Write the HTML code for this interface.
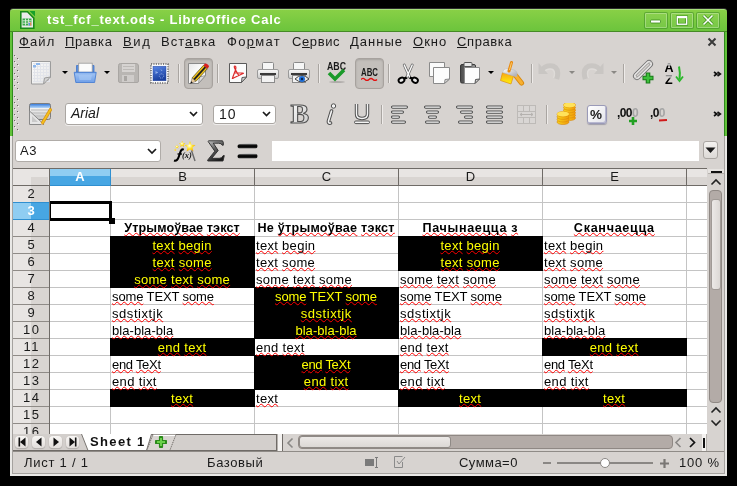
<!DOCTYPE html><html><head><meta charset="utf-8"><style>
*{margin:0;padding:0;box-sizing:border-box}
html,body{width:737px;height:486px;overflow:hidden;background:#000;font-family:"Liberation Sans", sans-serif}
.ab{position:absolute}
.t{position:absolute;white-space:pre;line-height:1}
body{will-change:transform}
</style></head><body>
<div class="ab" style="left:0;top:0;width:737px;height:486px;background:#000"></div>

<div class="ab" style="left:10px;top:9px;width:717px;height:23px;background:linear-gradient(#88d046,#6cc43c);border-top:1px solid #a6e07a;border-bottom:1px solid #468a26;border-radius:3px 3px 0 0;box-shadow:0 -1px 0 #2a2a2a"></div>
<div class="ab" style="left:10px;top:32px;width:3px;height:104px;background:#62c23a;border-right:1px solid #2f8a1c"></div>
<div class="ab" style="left:724px;top:32px;width:3px;height:104px;background:#62c23a;border-left:1px solid #2f8a1c"></div>
<div class="ab" style="left:10px;top:136px;width:3px;height:340px;background:#e9e8e6;border-right:1px solid #a5a29f"></div>
<div class="ab" style="left:724px;top:136px;width:3px;height:340px;background:#e9e8e6;border-left:1px solid #a5a29f"></div>
<div class="ab" style="left:12px;top:473px;width:713px;height:1px;background:#a5a29f"></div>
<div class="ab" style="left:10px;top:474px;width:717px;height:2px;background:#e9e8e6"></div>
<div class="ab" style="left:13px;top:32px;width:711px;height:441px;background:#d7d3d0"></div>
<div class="t" style="left:47px;top:13px;font-size:13px;font-weight:bold;color:#fff;letter-spacing:0.78px">tst_fcf_text.ods - LibreOffice Calc</div>
<div class="t" style="left:19px;top:35px;font-size:13px;color:#1a1a1a;letter-spacing:1.1px"><span style="text-decoration:underline;text-decoration-thickness:1px;text-underline-offset:1px">Ф</span>айл</div>
<div class="t" style="left:65px;top:35px;font-size:13px;color:#1a1a1a;letter-spacing:0.6px"><span style="text-decoration:underline;text-decoration-thickness:1px;text-underline-offset:1px">П</span>равка</div>
<div class="t" style="left:123px;top:35px;font-size:13px;color:#1a1a1a;letter-spacing:1.6px"><span style="text-decoration:underline;text-decoration-thickness:1px;text-underline-offset:1px">В</span>ид</div>
<div class="t" style="left:161px;top:35px;font-size:13px;color:#1a1a1a;letter-spacing:1.0px">Вст<span style="text-decoration:underline;text-decoration-thickness:1px;text-underline-offset:1px">а</span>вка</div>
<div class="t" style="left:227px;top:35px;font-size:13px;color:#1a1a1a;letter-spacing:1.3px">Фо<span style="text-decoration:underline;text-decoration-thickness:1px;text-underline-offset:1px">р</span>мат</div>
<div class="t" style="left:292px;top:35px;font-size:13px;color:#1a1a1a;letter-spacing:0.6px">С<span style="text-decoration:underline;text-decoration-thickness:1px;text-underline-offset:1px">е</span>рвис</div>
<div class="t" style="left:350px;top:35px;font-size:13px;color:#1a1a1a;letter-spacing:1.0px"><span style="text-decoration:underline;text-decoration-thickness:1px;text-underline-offset:1px">Д</span>анные</div>
<div class="t" style="left:413px;top:35px;font-size:13px;color:#1a1a1a;letter-spacing:1.0px"><span style="text-decoration:underline;text-decoration-thickness:1px;text-underline-offset:1px">О</span>кно</div>
<div class="t" style="left:457px;top:35px;font-size:13px;color:#1a1a1a;letter-spacing:0.6px"><span style="text-decoration:underline;text-decoration-thickness:1px;text-underline-offset:1px">С</span>правка</div>
<svg class="ab" style="left:19px;top:10px;" width="17" height="20" viewBox="0 0 17 20"><path d="M1.8 1.8H8.5L14.8 8.1V18.2H1.8Z" fill="#ebebeb" stroke="#1a8a1a" stroke-width="1.6"/><path d="M10.5 1H16V6.5Z" fill="#17a02a"/><rect x="3.5" y="8.5" width="9" height="7" fill="#3aa84a"/><path d="M3.5 10.8H12.5M3.5 13.2H12.5M6.5 8.5V15.5M9.5 8.5V15.5" stroke="#d8efd8" stroke-width="0.9"/><rect x="9" y="12" width="3.5" height="3.5" fill="#d0d0d0"/><rect x="9.6" y="13" width="1.2" height="2.5" fill="#3a8ad8"/><rect x="11" y="12.4" width="1.3" height="3.1" fill="#e08a50"/></svg>
<div class="ab" style="left:644px;top:12px;width:24px;height:17px;border:1px solid rgba(40,120,20,.45);border-radius:2px;box-shadow:inset 0 0 0 1px rgba(255,255,255,.28);background:rgba(255,255,255,.05)"></div>
<div class="ab" style="left:670px;top:12px;width:24px;height:17px;border:1px solid rgba(40,120,20,.45);border-radius:2px;box-shadow:inset 0 0 0 1px rgba(255,255,255,.28);background:rgba(255,255,255,.05)"></div>
<div class="ab" style="left:696px;top:12px;width:24px;height:17px;border:1px solid rgba(40,120,20,.45);border-radius:2px;box-shadow:inset 0 0 0 1px rgba(255,255,255,.28);background:rgba(255,255,255,.05)"></div>
<svg class="ab" style="left:649px;top:18px;" width="14" height="8" viewBox="0 0 14 8"><rect x="1.5" y="2" width="10" height="3" rx="1" fill="#fff" stroke="#3a8a1a" stroke-width="0.8"/></svg>
<svg class="ab" style="left:675px;top:15px;" width="14" height="11" viewBox="0 0 14 11"><rect x="2.3" y="1.8" width="9.4" height="7.4" fill="none" stroke="#3a8a1a" stroke-width="2.6"/><rect x="2.3" y="1.8" width="9.4" height="7.4" fill="none" stroke="#fff" stroke-width="1.4"/><rect x="2" y="1.2" width="10" height="2" fill="#fff"/></svg>
<svg class="ab" style="left:701px;top:14px;" width="14" height="12" viewBox="0 0 14 12"><path d="M2.5 1.5L11.5 10.5M11.5 1.5L2.5 10.5" stroke="#3a8a1a" stroke-width="3"/><path d="M2.5 1.5L11.5 10.5M11.5 1.5L2.5 10.5" stroke="#fff" stroke-width="1.6"/></svg>
<svg class="ab" style="left:707px;top:37px;" width="10" height="10" viewBox="0 0 10 10"><path d="M1.5 1.5L8.5 8.5M8.5 1.5L1.5 8.5" stroke="#3a3a3a" stroke-width="2"/></svg>
<svg class="ab" style="left:14px;top:55px;" width="5" height="36" viewBox="0 0 5 36"><rect x="0" y="0" width="1" height="1" fill="#6a6663"/><rect x="1" y="1" width="1" height="1" fill="#f4f2f0"/><rect x="3" y="3" width="1" height="1" fill="#6a6663"/><rect x="4" y="4" width="1" height="1" fill="#f4f2f0"/><rect x="0" y="6" width="1" height="1" fill="#6a6663"/><rect x="1" y="7" width="1" height="1" fill="#f4f2f0"/><rect x="3" y="9" width="1" height="1" fill="#6a6663"/><rect x="4" y="10" width="1" height="1" fill="#f4f2f0"/><rect x="0" y="12" width="1" height="1" fill="#6a6663"/><rect x="1" y="13" width="1" height="1" fill="#f4f2f0"/><rect x="3" y="15" width="1" height="1" fill="#6a6663"/><rect x="4" y="16" width="1" height="1" fill="#f4f2f0"/><rect x="0" y="18" width="1" height="1" fill="#6a6663"/><rect x="1" y="19" width="1" height="1" fill="#f4f2f0"/><rect x="3" y="21" width="1" height="1" fill="#6a6663"/><rect x="4" y="22" width="1" height="1" fill="#f4f2f0"/><rect x="0" y="24" width="1" height="1" fill="#6a6663"/><rect x="1" y="25" width="1" height="1" fill="#f4f2f0"/><rect x="3" y="27" width="1" height="1" fill="#6a6663"/><rect x="4" y="28" width="1" height="1" fill="#f4f2f0"/><rect x="0" y="30" width="1" height="1" fill="#6a6663"/><rect x="1" y="31" width="1" height="1" fill="#f4f2f0"/><rect x="3" y="33" width="1" height="1" fill="#6a6663"/><rect x="4" y="34" width="1" height="1" fill="#f4f2f0"/></svg>
<svg class="ab" style="left:31px;top:61px;" width="21" height="24" viewBox="0 0 21 24"><defs><linearGradient id="gnd" x1="0" y1="0" x2="1" y2="1"><stop offset="0" stop-color="#fcfcfc"/><stop offset="1" stop-color="#e4e4e4"/></linearGradient></defs><path d="M0.5 0.5H19.5V16L12.5 23H0.5Z" fill="url(#gnd)" stroke="#9c9c9c"/><line x1="3.5" y1="2" x2="3.5" y2="21" stroke="#e2e4ea" stroke-width="1"/><line x1="6.5" y1="2" x2="6.5" y2="21" stroke="#e2e4ea" stroke-width="1"/><line x1="9.5" y1="2" x2="9.5" y2="21" stroke="#e2e4ea" stroke-width="1"/><line x1="12.5" y1="2" x2="12.5" y2="21" stroke="#e2e4ea" stroke-width="1"/><line x1="15.5" y1="2" x2="15.5" y2="21" stroke="#e2e4ea" stroke-width="1"/><line x1="18.5" y1="2" x2="18.5" y2="21" stroke="#e2e4ea" stroke-width="1"/><line x1="2" y1="2.5" x2="18" y2="2.5" stroke="#e2e4ea" stroke-width="1"/><line x1="2" y1="5.5" x2="18" y2="5.5" stroke="#e2e4ea" stroke-width="1"/><line x1="2" y1="8.5" x2="18" y2="8.5" stroke="#e2e4ea" stroke-width="1"/><line x1="2" y1="11.5" x2="18" y2="11.5" stroke="#e2e4ea" stroke-width="1"/><line x1="2" y1="14.5" x2="18" y2="14.5" stroke="#e2e4ea" stroke-width="1"/><line x1="2" y1="17.5" x2="18" y2="17.5" stroke="#e2e4ea" stroke-width="1"/><line x1="2" y1="20.5" x2="18" y2="20.5" stroke="#e2e4ea" stroke-width="1"/><rect x="5" y="2" width="4" height="2" fill="#8fb8ec"/><rect x="2" y="4" width="3" height="2.5" fill="#8fb8ec"/><path d="M12.5 23L13.5 17L19.5 16Z" fill="#d4d4d4" stroke="#9c9c9c"/></svg>
<svg class="ab" style="left:62px;top:71px;" width="6" height="4" viewBox="0 0 6 4"><path d="M0 0H6L3 3Z" fill="#000"/></svg>
<svg class="ab" style="left:70px;top:58px;" width="30" height="30" viewBox="0 0 30 30"><defs><linearGradient id="gtr" x1="0" y1="0" x2="0" y2="1"><stop offset="0" stop-color="#5f95e6"/><stop offset="0.15" stop-color="#9cc0f2"/><stop offset="1" stop-color="#6f9fe8"/></linearGradient></defs><path d="M6.5 7.5H24V14H6.5Z" fill="#5a8fe0" stroke="#3f74c8" stroke-width="0.8"/><rect x="8.7" y="5.2" width="13.5" height="9" fill="#fbfbfb" stroke="#9a9a9a" stroke-width="0.8"/><path d="M4.2 14.3H26.2L24.6 24.5H5.8Z" fill="url(#gtr)" stroke="#4a7fd2" stroke-width="0.9"/><path d="M8.5 17H22L21 22H9.5Z" fill="#a9c9f5" opacity="0.6"/></svg>
<svg class="ab" style="left:104px;top:71px;" width="6" height="4" viewBox="0 0 6 4"><path d="M0 0H6L3 3Z" fill="#000"/></svg>
<svg class="ab" style="left:118px;top:63px;" width="21" height="20" viewBox="0 0 21 20"><path d="M0.5 2.5Q0.5 0.5 2.5 0.5H18Q20.5 0.5 20.5 3V18Q20.5 19.5 19 19.5H2Q0.5 19.5 0.5 18Z" fill="#b9b6b3" stroke="#a9a6a3"/><rect x="4" y="1" width="13" height="8" fill="#d6d3d1"/><line x1="5" y1="3.5" x2="16" y2="3.5" stroke="#bdbab7"/><line x1="5" y1="6.5" x2="16" y2="6.5" stroke="#bdbab7"/><rect x="4" y="12" width="12" height="7" fill="#cfccca"/><rect x="6" y="13" width="3" height="5" fill="#a9a6a3"/></svg>
<svg class="ab" style="left:150px;top:63px;" width="19" height="21" viewBox="0 0 19 21"><defs><linearGradient id="gst" x1="0" y1="0" x2="0.3" y2="1"><stop offset="0" stop-color="#5a88e8"/><stop offset="1" stop-color="#1a3f9e"/></linearGradient></defs><rect x="1" y="1" width="17" height="19" fill="#fff"/><rect x="1" y="1" width="17" height="19" fill="none" stroke="#5a5a5a" stroke-width="1.4" stroke-dasharray="1.1 1.3"/><rect x="3" y="3.2" width="13" height="14.6" fill="url(#gst)" stroke="#2a4aa0" stroke-width="0.5"/><circle cx="11.5" cy="13" r="2.2" fill="none" stroke="#a8c0f0" stroke-width="0.7" stroke-dasharray="1 0.8"/><path d="M6 8V11M6 9.5H8M11 6.5L12 8" stroke="#a8c0f0" stroke-width="0.7"/></svg>
<div class="ab" style="left:178px;top:64px;width:1px;height:19px;background:#a9a5a1;box-shadow:1px 0 0 #eeebe9"></div>
<div class="ab" style="left:184px;top:58px;width:29px;height:31px;background:#c3bfbb;border:1px solid #a7a29e;border-radius:4px;box-shadow:inset 0 1px 2px rgba(0,0,0,.15)"></div>
<svg class="ab" style="left:188px;top:63px;" width="22" height="22" viewBox="0 0 22 22"><defs><linearGradient id="gpd" x1="0" y1="0" x2="1" y2="1"><stop offset="0" stop-color="#e8e8e8"/><stop offset="0.5" stop-color="#fdfdfd"/><stop offset="1" stop-color="#f0f0f0"/></linearGradient></defs><path d="M0.5 0.5H17.5V12.5L10.5 20.5H0.5Z" fill="url(#gpd)" stroke="#8a8a8a"/><path d="M10.5 20.5L11.5 14L17.5 12.5Z" fill="#dcdcdc" stroke="#8a8a8a" stroke-width="0.8"/><g transform="translate(12 10) rotate(-48)"><rect x="-9" y="-2.6" width="17" height="5.2" fill="#f2c318" stroke="#3a3a1a" stroke-width="0.6"/><rect x="-9" y="-0.9" width="17" height="1.8" fill="#1e1e1e"/><path d="M8 -2.6H10Q11.5 -2.6 11.5 0Q11.5 2.6 10 2.6H8Z" fill="#d81e1e"/><path d="M-9 -2.6L-14 0L-9 2.6Z" fill="#e8c89a" stroke="#555" stroke-width="0.4"/><path d="M-12 -1L-14.5 0L-12 1Z" fill="#111"/></g></svg>
<div class="ab" style="left:217px;top:64px;width:1px;height:19px;background:#a9a5a1;box-shadow:1px 0 0 #eeebe9"></div>
<svg class="ab" style="left:229px;top:63px;" width="18" height="20" viewBox="0 0 18 20"><path d="M0.5 0.5H17.5V14L12.5 19.5H0.5Z" fill="#fcfcfc" stroke="#5a5a5a"/><path d="M12.5 19.5L13 14.5L17.5 14Z" fill="#d0d0d0" stroke="#5a5a5a"/><path d="M6 3Q4.5 3 6 6L10 13M6 3Q7.5 3 6.5 7L3.5 15Q3 16 4.5 15L14 10.5Q15 10 13.5 10L5 10" fill="none" stroke="#dd2a2a" stroke-width="1.2"/></svg>
<svg class="ab" style="left:257px;top:62px;" width="22" height="22" viewBox="0 0 22 22"><defs><linearGradient id="gpr" x1="0" y1="0" x2="0" y2="1"><stop offset="0" stop-color="#fafafa"/><stop offset="1" stop-color="#c8c8c8"/></linearGradient></defs><rect x="5.5" y="0.5" width="11" height="8" rx="1" fill="#f6f6f6" stroke="#8a8a8a"/><rect x="0.5" y="7.5" width="21" height="9" rx="1.5" fill="url(#gpr)" stroke="#9a9a9a"/><rect x="3" y="11" width="16" height="2" fill="#3a3a3a"/><rect x="4.5" y="13.5" width="13" height="7" fill="#f2f2f2" stroke="#8a8a8a"/></svg>
<svg class="ab" style="left:288px;top:62px;" width="22" height="22" viewBox="0 0 22 22"><defs><linearGradient id="gpr" x1="0" y1="0" x2="0" y2="1"><stop offset="0" stop-color="#fafafa"/><stop offset="1" stop-color="#c8c8c8"/></linearGradient></defs><rect x="5.5" y="0.5" width="11" height="8" rx="1" fill="#f6f6f6" stroke="#8a8a8a"/><rect x="0.5" y="7.5" width="21" height="9" rx="1.5" fill="url(#gpr)" stroke="#9a9a9a"/><rect x="3" y="11" width="16" height="2" fill="#3a3a3a"/><rect x="4.5" y="13.5" width="13" height="7" fill="#f2f2f2" stroke="#8a8a8a"/><path d="M7 17Q14 10 21 17Q14 23 7 17Z" fill="#e8e8e8" stroke="#444"/><circle cx="14" cy="17" r="3" fill="#1e6fd8"/><circle cx="14" cy="17" r="1.2" fill="#0a2550"/></svg>
<div class="ab" style="left:318px;top:64px;width:1px;height:19px;background:#a9a5a1;box-shadow:1px 0 0 #eeebe9"></div>
<svg class="ab" style="left:327px;top:62px;" width="21" height="21" viewBox="0 0 21 21"><text x="0" y="8" font-family="Liberation Sans" font-size="10.5" font-weight="bold" fill="#1a1a1a" textLength="19" lengthAdjust="spacingAndGlyphs">ABC</text><path d="M2 11L8 17L17 8" fill="none" stroke="#1b9a2a" stroke-width="3.6" stroke-linejoin="miter"/><ellipse cx="10" cy="20" rx="8" ry="0.8" fill="#000" opacity="0.25"/></svg>
<div class="ab" style="left:355px;top:58px;width:29px;height:31px;background:#c3bfbb;border:1px solid #a7a29e;border-radius:4px;box-shadow:inset 0 1px 2px rgba(0,0,0,.15)"></div>
<svg class="ab" style="left:361px;top:68px;" width="18" height="13" viewBox="0 0 18 13"><text x="0" y="8" font-family="Liberation Sans" font-size="10.5" font-weight="bold" fill="#1a1a1a" textLength="17" lengthAdjust="spacingAndGlyphs">ABC</text><path d="M0 11.5Q2 9.5 4 11.5T8 11.5T12 11.5T16 11.5" fill="none" stroke="#e41010" stroke-width="1.2"/></svg>
<div class="ab" style="left:388px;top:64px;width:1px;height:19px;background:#a9a5a1;box-shadow:1px 0 0 #eeebe9"></div>
<svg class="ab" style="left:394px;top:58px;" width="30" height="30" viewBox="0 0 30 30"><g transform="translate(14.2 15) scale(0.84) translate(-14.2 -14)"><path d="M9.5 4.5L16 19M19 4.5L12.5 19" stroke="#6a6a6a" stroke-width="3.4" stroke-linecap="round"/><path d="M9.5 4.5L16 19M19 4.5L12.5 19" stroke="#fcfcfc" stroke-width="1.6" stroke-linecap="round"/><path d="M12.5 19.5L8 21" stroke="#000" stroke-width="3"/><path d="M16 19.5L20.5 21" stroke="#000" stroke-width="3"/><ellipse cx="6.2" cy="22.6" rx="3.6" ry="2.9" fill="#e8e8e8" stroke="#000" stroke-width="2.2" transform="rotate(-30 6.2 22.6)"/><ellipse cx="22.3" cy="22.6" rx="3.6" ry="2.9" fill="#e8e8e8" stroke="#000" stroke-width="2.2" transform="rotate(30 22.3 22.6)"/></g></svg>
<svg class="ab" style="left:429px;top:62px;" width="21" height="22" viewBox="0 0 21 22"><path d="M0.5 0.5H15.5V14.5H0.5Z" fill="#fafafa" stroke="#8a8a8a"/><path d="M4.5 5.5H20.5V17L15.5 21.5H4.5Z" fill="#fcfcfc" stroke="#8a8a8a"/><path d="M15.5 21.5L16 17.5L20.5 17Z" fill="#d5d5d5" stroke="#8a8a8a"/></svg>
<svg class="ab" style="left:460px;top:62px;" width="20" height="22" viewBox="0 0 20 22"><defs><linearGradient id="gcb" x1="0" y1="0" x2="1" y2="0"><stop offset="0" stop-color="#4a4a4a"/><stop offset="1" stop-color="#9a9a9a"/></linearGradient></defs><rect x="0.5" y="2.5" width="15" height="18.5" rx="1.5" fill="url(#gcb)" stroke="#3a3a3a"/><rect x="4" y="0.5" width="8" height="4" rx="1" fill="#e8e8e8" stroke="#555"/><path d="M4.5 5.5H19.5V17L15 21.5H4.5Z" fill="#fcfcfc" stroke="#8a8a8a"/><path d="M15 21.5L15.5 17.5L19.5 17Z" fill="#d5d5d5" stroke="#555"/></svg>
<svg class="ab" style="left:488px;top:71px;" width="6" height="4" viewBox="0 0 6 4"><path d="M0 0H6L3 3Z" fill="#000"/></svg>
<svg class="ab" style="left:496px;top:58px;" width="30" height="30" viewBox="0 0 30 30"><defs><linearGradient id="gbr" x1="0" y1="0" x2="0" y2="1"><stop offset="0" stop-color="#f7a418"/><stop offset="1" stop-color="#fff20a"/></linearGradient><linearGradient id="gfe" x1="0" y1="0" x2="1" y2="1"><stop offset="0" stop-color="#ffffff"/><stop offset="1" stop-color="#a8a8b0"/></linearGradient></defs><path d="M20 18L25.5 25" stroke="#d88a10" stroke-width="5.2" stroke-linecap="round"/><path d="M20 18L25.5 25" stroke="#f8b030" stroke-width="3.2" stroke-linecap="round"/><path d="M6.5 14.5L17.5 18L15 26L4.5 22.5Z" fill="url(#gbr)" stroke="#e09010" stroke-width="0.7"/><path d="M6.5 14.5Q7 10.5 11 10.5L18 12Q22.5 13.5 20.5 18.5L17.5 18Z" fill="url(#gfe)" stroke="#b8b8c0" stroke-width="0.6"/><path d="M15.5 4.5L13 13" stroke="#e88a10" stroke-width="3" stroke-linecap="round"/><path d="M15.5 4.5L13.5 12" stroke="#ffd070" stroke-width="1"/></svg>
<div class="ab" style="left:531px;top:64px;width:1px;height:19px;background:#a9a5a1;box-shadow:1px 0 0 #eeebe9"></div>
<svg class="ab" style="left:538px;top:61px;" width="24" height="20" viewBox="0 0 24 20"><g><path d="M3 11.5Q6 5 12 5Q19 5 19.5 12Q19.5 15 18.5 18" fill="none" stroke="#c9c6c3" stroke-width="5.5"/><path d="M5 12Q8 8 12 8Q16.5 8 16.5 12.5Q16.5 14.5 15.5 17" fill="none" stroke="#dedbd8" stroke-width="1.4"/><path d="M0.5 2V13H10Z" fill="#c9c6c3"/></g></svg>
<svg class="ab" style="left:569px;top:71px;" width="6" height="4" viewBox="0 0 6 4"><path d="M0 0H6L3 3Z" fill="#8a8884"/></svg>
<svg class="ab" style="left:580px;top:61px;" width="24" height="20" viewBox="0 0 24 20"><g transform="translate(24 0) scale(-1 1)"><path d="M3 11.5Q6 5 12 5Q19 5 19.5 12Q19.5 15 18.5 18" fill="none" stroke="#c9c6c3" stroke-width="5.5"/><path d="M5 12Q8 8 12 8Q16.5 8 16.5 12.5Q16.5 14.5 15.5 17" fill="none" stroke="#dedbd8" stroke-width="1.4"/><path d="M0.5 2V13H10Z" fill="#c9c6c3"/></g></svg>
<svg class="ab" style="left:611px;top:71px;" width="6" height="4" viewBox="0 0 6 4"><path d="M0 0H6L3 3Z" fill="#8a8884"/></svg>
<div class="ab" style="left:623px;top:64px;width:1px;height:19px;background:#a9a5a1;box-shadow:1px 0 0 #eeebe9"></div>
<svg class="ab" style="left:628px;top:58px;" width="30" height="30" viewBox="0 0 30 30"><g transform="translate(15 12) rotate(-45)"><rect x="-12" y="-3.5" width="24" height="7" rx="3.5" fill="none" stroke="#777" stroke-width="1"/><rect x="-10.5" y="-2.3" width="21" height="4.6" rx="2.3" fill="none" stroke="#e8e8e8" stroke-width="1"/><rect x="-9" y="-1.1" width="18" height="2.2" rx="1.1" fill="none" stroke="#888" stroke-width="0.8"/><path d="M-13 0.5H-9" stroke="#aaa" stroke-width="0.8"/><path d="M9 -0.5H13" stroke="#aaa" stroke-width="0.8"/></g><path d="M20 14.5V25.5M14.5 20H25.5" stroke="#1a7a1a" stroke-width="4.6"/><path d="M20 15.5V24.5M15.5 20H24.5" stroke="#3cc03a" stroke-width="2.4"/></svg>
<svg class="ab" style="left:665px;top:62px;" width="19" height="23" viewBox="0 0 19 23"><defs><linearGradient id="gaz" x1="0" y1="0" x2="0" y2="1"><stop offset="0" stop-color="#4a4a4a"/><stop offset="0.3" stop-color="#bdbdbd"/><stop offset="0.42" stop-color="#000"/><stop offset="1" stop-color="#000"/></linearGradient></defs><text x="-0.5" y="9.5" font-family="Liberation Sans" font-size="12.5" font-weight="bold" fill="url(#gaz)">A</text><text x="0" y="22" font-family="Liberation Sans" font-size="12.5" font-weight="bold" fill="url(#gaz)">Z</text><path d="M14 4.5Q15.5 11 14.5 17.5" stroke="#2ab82a" stroke-width="2" fill="none"/><path d="M11 14.5L14.5 19L18 14.5" fill="none" stroke="#2ab82a" stroke-width="1.8"/></svg>
<svg class="ab" style="left:713px;top:71px;" width="9" height="6" viewBox="0 0 9 6"><path d="M1 1L3.8 3L1 5M4.5 1L7.3 3L4.5 5" fill="none" stroke="#111" stroke-width="1.7"/></svg>
<svg class="ab" style="left:14px;top:96px;" width="5" height="36" viewBox="0 0 5 36"><rect x="0" y="0" width="1" height="1" fill="#6a6663"/><rect x="1" y="1" width="1" height="1" fill="#f4f2f0"/><rect x="3" y="3" width="1" height="1" fill="#6a6663"/><rect x="4" y="4" width="1" height="1" fill="#f4f2f0"/><rect x="0" y="6" width="1" height="1" fill="#6a6663"/><rect x="1" y="7" width="1" height="1" fill="#f4f2f0"/><rect x="3" y="9" width="1" height="1" fill="#6a6663"/><rect x="4" y="10" width="1" height="1" fill="#f4f2f0"/><rect x="0" y="12" width="1" height="1" fill="#6a6663"/><rect x="1" y="13" width="1" height="1" fill="#f4f2f0"/><rect x="3" y="15" width="1" height="1" fill="#6a6663"/><rect x="4" y="16" width="1" height="1" fill="#f4f2f0"/><rect x="0" y="18" width="1" height="1" fill="#6a6663"/><rect x="1" y="19" width="1" height="1" fill="#f4f2f0"/><rect x="3" y="21" width="1" height="1" fill="#6a6663"/><rect x="4" y="22" width="1" height="1" fill="#f4f2f0"/><rect x="0" y="24" width="1" height="1" fill="#6a6663"/><rect x="1" y="25" width="1" height="1" fill="#f4f2f0"/><rect x="3" y="27" width="1" height="1" fill="#6a6663"/><rect x="4" y="28" width="1" height="1" fill="#f4f2f0"/><rect x="0" y="30" width="1" height="1" fill="#6a6663"/><rect x="1" y="31" width="1" height="1" fill="#f4f2f0"/><rect x="3" y="33" width="1" height="1" fill="#6a6663"/><rect x="4" y="34" width="1" height="1" fill="#f4f2f0"/></svg>
<svg class="ab" style="left:29px;top:103px;" width="23" height="22" viewBox="0 0 23 22"><defs><linearGradient id="gsy" x1="0" y1="0" x2="0" y2="1"><stop offset="0" stop-color="#2a72d8"/><stop offset="0.25" stop-color="#a8cdf5"/><stop offset="0.3" stop-color="#f2f2f2"/><stop offset="1" stop-color="#c4c4c4"/></linearGradient></defs><rect x="0.5" y="0.5" width="21" height="16" rx="2" fill="url(#gsy)" stroke="#7d7d7d"/><line x1="2" y1="7" x2="20" y2="7" stroke="#b9b9b9"/><line x1="2" y1="10" x2="20" y2="10" stroke="#b9b9b9"/><line x1="2" y1="13" x2="20" y2="13" stroke="#b9b9b9"/><path d="M0.5 8V21.5H15Z" fill="#e6e6e6" stroke="#8a8a8a"/><path d="M3 13V19H9Z" fill="#c9c9c9"/><path d="M12 20L21 5L23 6.5L14 21.5Z" fill="#f5c21a" stroke="#d68a10" stroke-width="0.8"/><path d="M12 20L12.5 22L14 21.5Z" fill="#e9c9a0"/></svg>
<div class="ab" style="left:65px;top:103px;width:138px;height:22px;background:#fff;border:1px solid #aaa6a2;border-radius:3px;box-shadow:0 1px 0 rgba(255,255,255,.6)"></div><div class="t" style="left:71px;top:106px;font-size:14px;letter-spacing:0px;font-style:italic;color:#1a1a1a">Arial</div><svg class="ab" style="left:189px;top:111px;" width="9" height="6" viewBox="0 0 9 6"><path d="M1 1L4.5 4.5L8 1" fill="none" stroke="#1a1a1a" stroke-width="1.7"/></svg>
<div class="ab" style="left:213px;top:105px;width:63px;height:19px;background:#fff;border:1px solid #aaa6a2;border-radius:3px;box-shadow:0 1px 0 rgba(255,255,255,.6)"></div><div class="t" style="left:219px;top:107px;font-size:14px;letter-spacing:1px;color:#1a1a1a">10</div><svg class="ab" style="left:262px;top:111px;" width="9" height="6" viewBox="0 0 9 6"><path d="M1 1L4.5 4.5L8 1" fill="none" stroke="#1a1a1a" stroke-width="1.7"/></svg>
<svg class="ab" style="left:290px;top:103px;" width="21" height="22" viewBox="0 0 21 22"><defs><linearGradient id="gbb" x1="0" y1="0" x2="1" y2="1"><stop offset="0" stop-color="#ffffff"/><stop offset="1" stop-color="#c8c8c8"/></linearGradient></defs><text x="0.5" y="19.5" font-family="Liberation Serif" font-size="28" font-weight="bold" fill="url(#gbb)" stroke="#505050" stroke-width="1.1">B</text></svg>
<svg class="ab" style="left:326px;top:103px;" width="11" height="22" viewBox="0 0 11 22"><path d="M5.5 8L2.5 18Q2 20.5 4.5 20" fill="none" stroke="#505050" stroke-width="3.6" stroke-linecap="round"/><path d="M5.5 8L2.5 18Q2 20.5 4.5 20" fill="none" stroke="#f4f4f4" stroke-width="1.6" stroke-linecap="round"/><circle cx="7.5" cy="3" r="2.2" fill="#f4f4f4" stroke="#505050" stroke-width="1"/></svg>
<svg class="ab" style="left:354px;top:103px;" width="16" height="22" viewBox="0 0 16 22"><path d="M2.5 1V11Q2.5 15.5 8 15.5Q13.5 15.5 13.5 11V1" fill="none" stroke="#505050" stroke-width="3.4"/><path d="M2.5 1V11Q2.5 15.5 8 15.5Q13.5 15.5 13.5 11V1" fill="none" stroke="#f4f4f4" stroke-width="1.4"/><rect x="0.5" y="18" width="15" height="2.6" rx="1.3" fill="#f4f4f4" stroke="#505050" stroke-width="1"/></svg>
<div class="ab" style="left:381px;top:105px;width:1px;height:19px;background:#a9a5a1;box-shadow:1px 0 0 #eeebe9"></div>
<svg class="ab" style="left:391px;top:105px;" width="18" height="19" viewBox="0 0 18 19"><rect x="0.5" y="1" width="16" height="2.2" rx="1.1" fill="#f8f8f8" stroke="#505050" stroke-width="1.1"/><rect x="0.5" y="6" width="12" height="2.2" rx="1.1" fill="#f8f8f8" stroke="#505050" stroke-width="1.1"/><rect x="0.5" y="11" width="8" height="2.2" rx="1.1" fill="#f8f8f8" stroke="#505050" stroke-width="1.1"/><rect x="0.5" y="16" width="14" height="2.2" rx="1.1" fill="#f8f8f8" stroke="#505050" stroke-width="1.1"/></svg>
<svg class="ab" style="left:424px;top:105px;" width="18" height="19" viewBox="0 0 18 19"><rect x="0.5" y="1" width="16" height="2.2" rx="1.1" fill="#f8f8f8" stroke="#505050" stroke-width="1.1"/><rect x="2.5" y="6" width="12" height="2.2" rx="1.1" fill="#f8f8f8" stroke="#505050" stroke-width="1.1"/><rect x="4.5" y="11" width="8" height="2.2" rx="1.1" fill="#f8f8f8" stroke="#505050" stroke-width="1.1"/><rect x="1.5" y="16" width="14" height="2.2" rx="1.1" fill="#f8f8f8" stroke="#505050" stroke-width="1.1"/></svg>
<svg class="ab" style="left:456px;top:105px;" width="18" height="19" viewBox="0 0 18 19"><rect x="0.5" y="1" width="16" height="2.2" rx="1.1" fill="#f8f8f8" stroke="#505050" stroke-width="1.1"/><rect x="4.5" y="6" width="12" height="2.2" rx="1.1" fill="#f8f8f8" stroke="#505050" stroke-width="1.1"/><rect x="8.5" y="11" width="8" height="2.2" rx="1.1" fill="#f8f8f8" stroke="#505050" stroke-width="1.1"/><rect x="2.5" y="16" width="14" height="2.2" rx="1.1" fill="#f8f8f8" stroke="#505050" stroke-width="1.1"/></svg>
<svg class="ab" style="left:486px;top:105px;" width="18" height="19" viewBox="0 0 18 19"><rect x="0.5" y="1" width="16" height="2.2" rx="1.1" fill="#f8f8f8" stroke="#505050" stroke-width="1.1"/><rect x="0.5" y="6" width="16" height="2.2" rx="1.1" fill="#f8f8f8" stroke="#505050" stroke-width="1.1"/><rect x="0.5" y="11" width="16" height="2.2" rx="1.1" fill="#f8f8f8" stroke="#505050" stroke-width="1.1"/><rect x="0.5" y="16" width="16" height="2.2" rx="1.1" fill="#f8f8f8" stroke="#505050" stroke-width="1.1"/></svg>
<svg class="ab" style="left:517px;top:105px;" width="19" height="19" viewBox="0 0 19 19"><rect x="0.5" y="0.5" width="18" height="18" fill="#d9d6d4" stroke="#bdbab7"/><path d="M6.5 0.5V6.5M12.5 0.5V6.5M6.5 12.5V18.5M12.5 12.5V18.5M0.5 6.5H18.5M0.5 12.5H18.5" stroke="#bdbab7"/><rect x="1" y="7" width="17" height="5" fill="#d9d6d4"/><path d="M3 9.5H16M3 9.5L5 8M3 9.5L5 11M16 9.5L14 8M16 9.5L14 11" stroke="#b5b2af"/></svg>
<div class="ab" style="left:546px;top:105px;width:1px;height:19px;background:#a9a5a1;box-shadow:1px 0 0 #eeebe9"></div>
<svg class="ab" style="left:556px;top:103px;" width="20" height="22" viewBox="0 0 20 22"><defs><linearGradient id="gco" x1="0" y1="0" x2="1" y2="0"><stop offset="0" stop-color="#f7d21a"/><stop offset="1" stop-color="#f29a0a"/></linearGradient></defs><ellipse cx="13.5" cy="15.0" rx="6" ry="2.6" fill="url(#gco)" stroke="#d98a08" stroke-width="0.6"/><ellipse cx="13.5" cy="12.4" rx="6" ry="2.6" fill="url(#gco)" stroke="#d98a08" stroke-width="0.6"/><ellipse cx="13.5" cy="9.8" rx="6" ry="2.6" fill="url(#gco)" stroke="#d98a08" stroke-width="0.6"/><ellipse cx="13.5" cy="7.199999999999999" rx="6" ry="2.6" fill="url(#gco)" stroke="#d98a08" stroke-width="0.6"/><ellipse cx="13.5" cy="4.6" rx="6" ry="2.6" fill="url(#gco)" stroke="#d98a08" stroke-width="0.6"/><ellipse cx="13.5" cy="2.0" rx="6" ry="2.6" fill="url(#gco)" stroke="#d98a08" stroke-width="0.6"/><ellipse cx="13.5" cy="2" rx="6" ry="2.4" fill="#ffe25a"/><ellipse cx="7" cy="19.0" rx="6" ry="2.6" fill="url(#gco)" stroke="#d98a08" stroke-width="0.6"/><ellipse cx="7" cy="16.4" rx="6" ry="2.6" fill="url(#gco)" stroke="#d98a08" stroke-width="0.6"/><ellipse cx="7" cy="13.8" rx="6" ry="2.6" fill="url(#gco)" stroke="#d98a08" stroke-width="0.6"/><ellipse cx="7" cy="11.2" rx="6" ry="2.6" fill="url(#gco)" stroke="#d98a08" stroke-width="0.6"/><ellipse cx="7" cy="11" rx="6" ry="2.4" fill="#ffe25a"/></svg>
<div class="ab" style="left:587px;top:105px;width:20px;height:19px;background:linear-gradient(135deg,#ffffff,#e4e4ea);border:1px solid #9a9ab8;border-radius:3px;box-shadow:inset -1px -1px 0 #b8b8d0,0 1px 1px rgba(60,60,100,.35)"></div><div class="t" style="left:590px;top:108px;font-size:13.5px;font-weight:bold;color:#222">%</div>
<div class="t" style="left:617px;top:107px;font-size:12px;font-weight:bold;letter-spacing:-0.6px;color:#111">,00<span style="color:#a5a5a5">0</span></div>
<svg class="ab" style="left:629px;top:117px;" width="8" height="8" viewBox="0 0 8 8"><path d="M4 0V8M0 4H8" stroke="#22a022" stroke-width="2.6"/></svg>
<div class="t" style="left:650px;top:107px;font-size:12px;font-weight:bold;letter-spacing:-0.6px;color:#111">,0<span style="color:#a5a5a5">0</span></div>
<svg class="ab" style="left:659px;top:119px;" width="9" height="3" viewBox="0 0 9 3"><path d="M0 1.5L8 1" stroke="#d01a1a" stroke-width="2"/></svg>
<svg class="ab" style="left:713px;top:111px;" width="9" height="6" viewBox="0 0 9 6"><path d="M1 1L3.8 3L1 5M4.5 1L7.3 3L4.5 5" fill="none" stroke="#111" stroke-width="1.7"/></svg>
<svg class="ab" style="left:170px;top:137px;" width="30" height="28" viewBox="0 0 30 28"><defs><radialGradient id="gfx" cx="0.45" cy="0.45" r="0.6"><stop offset="0" stop-color="#ffffe8"/><stop offset="0.5" stop-color="#ffe020"/><stop offset="1" stop-color="#f0a010"/></radialGradient></defs><path d="M20.00,3.00 L21.53,6.70 L25.52,7.01 L22.47,9.60 L23.41,13.49 L20.00,11.40 L16.59,13.49 L17.53,9.60 L14.48,7.01 L18.47,6.70Z" fill="url(#gfx)" transform="translate(0 1)"/><path d="M12.20,2.80 L13.08,4.99 L15.43,5.15 L13.63,6.66 L14.20,8.95 L12.20,7.70 L10.20,8.95 L10.77,6.66 L8.97,5.15 L11.32,4.99Z" fill="url(#gfx)" transform="translate(0 1)"/><path d="M7.00,6.60 L7.59,7.99 L9.09,8.12 L7.95,9.11 L8.29,10.58 L7.00,9.80 L5.71,10.58 L6.05,9.11 L4.91,8.12 L6.41,7.99Z" fill="url(#gfx)" transform="translate(0 1)"/><circle cx="5.3" cy="13" r="1" fill="#f8d840"/><path d="M21.5 13.5L25 24" stroke="#6a6a6a" stroke-width="1.4"/><path d="M4 23.5Q7 24.5 8.5 20.5L10.8 14Q11.8 11.8 13.8 12.6" fill="none" stroke="#000" stroke-width="2.1"/><path d="M7.5 17H12" stroke="#000" stroke-width="1.3"/><text x="12" y="21" font-family="Liberation Serif" font-size="8.5" font-style="italic" font-weight="bold" fill="#111">(x)</text></svg>
<svg class="ab" style="left:207px;top:140px;" width="18" height="22" viewBox="0 0 18 22"><defs><linearGradient id="gsg" x1="0" y1="0" x2="0.6" y2="1"><stop offset="0" stop-color="#c8c8c8"/><stop offset="0.5" stop-color="#5a5a5a"/><stop offset="1" stop-color="#1a1a1a"/></linearGradient></defs><path d="M1.5 0.8H15.5Q16.8 2 16.3 5.2H15.2Q14.5 3.2 11.5 3.2H6.3L11.2 10.5L4.8 18.3H12.2Q15 18.3 16.2 15.6H17.3L16 21H0.8L0.6 20.2L7.8 11.2L1.2 1.6Z" fill="url(#gsg)" stroke="#2a2a2a" stroke-width="0.9" stroke-linejoin="round"/></svg>
<svg class="ab" style="left:237px;top:143px;" width="21" height="16" viewBox="0 0 21 16"><defs><linearGradient id="geq" x1="0" y1="0" x2="0" y2="1"><stop offset="0" stop-color="#d0d0d0"/><stop offset="0.35" stop-color="#111"/><stop offset="0.75" stop-color="#000"/><stop offset="1" stop-color="#777"/></linearGradient></defs><path d="M2.5 1Q10 0 18.5 0.5Q20.5 0.8 20.5 3Q20.5 5.5 18.5 5.5H2.5Q0.5 5.5 0.5 3.2Q0.5 1.2 2.5 1Z" fill="url(#geq)"/><path d="M2.5 11Q10 10 18.5 10.5Q20.5 10.8 20.5 13Q20.5 15.5 18.5 15.5H2.5Q0.5 15.5 0.5 13.2Q0.5 11.2 2.5 11Z" fill="url(#geq)"/></svg>
<div class="ab" style="left:703px;top:141px;width:15px;height:18px;background:linear-gradient(#f4f2f0,#dcd9d6);border:1px solid #aaa6a2;border-radius:3px"></div>
<svg class="ab" style="left:705px;top:147px;" width="11" height="7" viewBox="0 0 11 7"><path d="M0.5 0.5H10.5L5.5 6Z" fill="#1a1a1a"/></svg>
<div class="ab" style="left:15px;top:140px;width:146px;height:22px;background:#fff;border:1px solid #b0aca8;border-radius:3px"></div>
<svg class="ab" style="left:147px;top:148px;" width="10" height="7" viewBox="0 0 10 7"><path d="M1 1L5 5L9 1" fill="none" stroke="#1a1a1a" stroke-width="1.7"/></svg>
<div class="t" style="left:20px;top:144px;font-size:13px;letter-spacing:0.5px;color:#1a1a1a">A3</div>
<div class="ab" style="left:272px;top:141px;width:427px;height:20px;background:#fff"></div>
<div class="ab" style="left:50px;top:186px;width:657px;height:248px;background:#fff"></div>
<div class="ab" style="left:13px;top:168px;width:694px;height:18px;background:linear-gradient(#e8e5e3 0,#e8e5e3 8px,#d9d5d2 8px);border-top:1px solid #6f6b67;border-bottom:1px solid #6f6b67"></div>
<div class="ab" style="left:13px;top:169px;width:36px;height:16px;background:#e8e5e3"></div>
<div class="ab" style="left:31px;top:177px;width:17px;height:8px;background:#d9d5d2"></div>
<div class="ab" style="left:50px;top:169px;width:61px;height:17px;background:linear-gradient(#8fcdf2 0,#8fcdf2 7px,#47a6e3 7px);border-right:1px solid #2f8fd0;border-bottom:1px solid #2f8fd0"></div>
<div class="t" style="left:50px;top:170px;width:60px;text-align:center;font-size:13px;font-weight:bold;color:#fff">A</div>
<div class="t" style="left:111px;top:170px;width:143px;text-align:center;font-size:13px;font-weight:normal;color:#1a1a1a">B</div>
<div class="t" style="left:255px;top:170px;width:143px;text-align:center;font-size:13px;font-weight:normal;color:#1a1a1a">C</div>
<div class="t" style="left:399px;top:170px;width:143px;text-align:center;font-size:13px;font-weight:normal;color:#1a1a1a">D</div>
<div class="t" style="left:543px;top:170px;width:143px;text-align:center;font-size:13px;font-weight:normal;color:#1a1a1a">E</div>
<div class="ab" style="left:49px;top:169px;width:1px;height:16px;background:#6f6b67"></div>
<div class="ab" style="left:254px;top:169px;width:1px;height:16px;background:#6f6b67"></div>
<div class="ab" style="left:398px;top:169px;width:1px;height:16px;background:#6f6b67"></div>
<div class="ab" style="left:542px;top:169px;width:1px;height:16px;background:#6f6b67"></div>
<div class="ab" style="left:686px;top:169px;width:1px;height:16px;background:#6f6b67"></div>
<div class="ab" style="left:13px;top:186px;width:36px;height:248px;background:linear-gradient(90deg,#e8e5e3 0,#e8e5e3 18px,#d9d5d2 18px)"></div>
<div class="ab" style="left:49px;top:169px;width:1px;height:265px;background:#6f6b67"></div>
<div class="ab" style="left:50px;top:202px;width:657px;height:1px;background:#c4c4c4"></div>
<div class="ab" style="left:13px;top:202px;width:36px;height:1px;background:#8f8b87"></div>
<div class="ab" style="left:50px;top:219px;width:657px;height:1px;background:#c4c4c4"></div>
<div class="ab" style="left:13px;top:219px;width:36px;height:1px;background:#8f8b87"></div>
<div class="ab" style="left:50px;top:236px;width:657px;height:1px;background:#c4c4c4"></div>
<div class="ab" style="left:13px;top:236px;width:36px;height:1px;background:#8f8b87"></div>
<div class="ab" style="left:50px;top:253px;width:657px;height:1px;background:#c4c4c4"></div>
<div class="ab" style="left:13px;top:253px;width:36px;height:1px;background:#8f8b87"></div>
<div class="ab" style="left:50px;top:270px;width:657px;height:1px;background:#c4c4c4"></div>
<div class="ab" style="left:13px;top:270px;width:36px;height:1px;background:#8f8b87"></div>
<div class="ab" style="left:50px;top:287px;width:657px;height:1px;background:#c4c4c4"></div>
<div class="ab" style="left:13px;top:287px;width:36px;height:1px;background:#8f8b87"></div>
<div class="ab" style="left:50px;top:304px;width:657px;height:1px;background:#c4c4c4"></div>
<div class="ab" style="left:13px;top:304px;width:36px;height:1px;background:#8f8b87"></div>
<div class="ab" style="left:50px;top:321px;width:657px;height:1px;background:#c4c4c4"></div>
<div class="ab" style="left:13px;top:321px;width:36px;height:1px;background:#8f8b87"></div>
<div class="ab" style="left:50px;top:338px;width:657px;height:1px;background:#c4c4c4"></div>
<div class="ab" style="left:13px;top:338px;width:36px;height:1px;background:#8f8b87"></div>
<div class="ab" style="left:50px;top:355px;width:657px;height:1px;background:#c4c4c4"></div>
<div class="ab" style="left:13px;top:355px;width:36px;height:1px;background:#8f8b87"></div>
<div class="ab" style="left:50px;top:372px;width:657px;height:1px;background:#c4c4c4"></div>
<div class="ab" style="left:13px;top:372px;width:36px;height:1px;background:#8f8b87"></div>
<div class="ab" style="left:50px;top:389px;width:657px;height:1px;background:#c4c4c4"></div>
<div class="ab" style="left:13px;top:389px;width:36px;height:1px;background:#8f8b87"></div>
<div class="ab" style="left:50px;top:406px;width:657px;height:1px;background:#c4c4c4"></div>
<div class="ab" style="left:13px;top:406px;width:36px;height:1px;background:#8f8b87"></div>
<div class="ab" style="left:50px;top:423px;width:657px;height:1px;background:#c4c4c4"></div>
<div class="ab" style="left:13px;top:423px;width:36px;height:1px;background:#8f8b87"></div>
<div class="ab" style="left:110px;top:186px;width:1px;height:248px;background:#c4c4c4"></div>
<div class="ab" style="left:254px;top:186px;width:1px;height:248px;background:#c4c4c4"></div>
<div class="ab" style="left:398px;top:186px;width:1px;height:248px;background:#c4c4c4"></div>
<div class="ab" style="left:542px;top:186px;width:1px;height:248px;background:#c4c4c4"></div>
<div class="ab" style="left:686px;top:186px;width:1px;height:248px;background:#c4c4c4"></div>
<div class="ab" style="left:13px;top:202px;width:36px;height:18px;background:linear-gradient(90deg,#8fcdf2 0,#8fcdf2 18px,#47a6e3 18px);border-top:1px solid #2f8fd0;border-bottom:1px solid #2f8fd0"></div>
<div class="t" style="left:13px;top:187px;width:36px;text-align:center;font-size:13px;font-weight:normal;letter-spacing:1.5px;text-indent:1.5px;color:#1a1a1a">2</div>
<div class="t" style="left:13px;top:204px;width:36px;text-align:center;font-size:13px;font-weight:bold;letter-spacing:1.5px;text-indent:1.5px;color:#fff">3</div>
<div class="t" style="left:13px;top:221px;width:36px;text-align:center;font-size:13px;font-weight:normal;letter-spacing:1.5px;text-indent:1.5px;color:#1a1a1a">4</div>
<div class="t" style="left:13px;top:238px;width:36px;text-align:center;font-size:13px;font-weight:normal;letter-spacing:1.5px;text-indent:1.5px;color:#1a1a1a">5</div>
<div class="t" style="left:13px;top:255px;width:36px;text-align:center;font-size:13px;font-weight:normal;letter-spacing:1.5px;text-indent:1.5px;color:#1a1a1a">6</div>
<div class="t" style="left:13px;top:272px;width:36px;text-align:center;font-size:13px;font-weight:normal;letter-spacing:1.5px;text-indent:1.5px;color:#1a1a1a">7</div>
<div class="t" style="left:13px;top:289px;width:36px;text-align:center;font-size:13px;font-weight:normal;letter-spacing:1.5px;text-indent:1.5px;color:#1a1a1a">8</div>
<div class="t" style="left:13px;top:306px;width:36px;text-align:center;font-size:13px;font-weight:normal;letter-spacing:1.5px;text-indent:1.5px;color:#1a1a1a">9</div>
<div class="t" style="left:13px;top:323px;width:36px;text-align:center;font-size:13px;font-weight:normal;letter-spacing:1.5px;text-indent:1.5px;color:#1a1a1a">10</div>
<div class="t" style="left:13px;top:340px;width:36px;text-align:center;font-size:13px;font-weight:normal;letter-spacing:1.5px;text-indent:1.5px;color:#1a1a1a">11</div>
<div class="t" style="left:13px;top:357px;width:36px;text-align:center;font-size:13px;font-weight:normal;letter-spacing:1.5px;text-indent:1.5px;color:#1a1a1a">12</div>
<div class="t" style="left:13px;top:374px;width:36px;text-align:center;font-size:13px;font-weight:normal;letter-spacing:1.5px;text-indent:1.5px;color:#1a1a1a">13</div>
<div class="t" style="left:13px;top:391px;width:36px;text-align:center;font-size:13px;font-weight:normal;letter-spacing:1.5px;text-indent:1.5px;color:#1a1a1a">14</div>
<div class="t" style="left:13px;top:408px;width:36px;text-align:center;font-size:13px;font-weight:normal;letter-spacing:1.5px;text-indent:1.5px;color:#1a1a1a">15</div>
<div class="t" style="left:13px;top:425px;width:36px;text-align:center;font-size:13px;font-weight:normal;letter-spacing:1.5px;text-indent:1.5px;color:#1a1a1a">16</div>
<div class="ab" style="left:110px;top:236px;width:145px;height:18px;background:#000"></div>
<div class="ab" style="left:110px;top:253px;width:145px;height:18px;background:#000"></div>
<div class="ab" style="left:110px;top:270px;width:145px;height:18px;background:#000"></div>
<div class="ab" style="left:110px;top:338px;width:145px;height:18px;background:#000"></div>
<div class="ab" style="left:110px;top:389px;width:145px;height:18px;background:#000"></div>
<div class="ab" style="left:254px;top:287px;width:145px;height:18px;background:#000"></div>
<div class="ab" style="left:254px;top:304px;width:145px;height:18px;background:#000"></div>
<div class="ab" style="left:254px;top:321px;width:145px;height:18px;background:#000"></div>
<div class="ab" style="left:254px;top:355px;width:145px;height:18px;background:#000"></div>
<div class="ab" style="left:254px;top:372px;width:145px;height:18px;background:#000"></div>
<div class="ab" style="left:398px;top:236px;width:145px;height:18px;background:#000"></div>
<div class="ab" style="left:398px;top:253px;width:145px;height:18px;background:#000"></div>
<div class="ab" style="left:398px;top:389px;width:145px;height:18px;background:#000"></div>
<div class="ab" style="left:542px;top:338px;width:145px;height:18px;background:#000"></div>
<div class="ab" style="left:542px;top:389px;width:145px;height:18px;background:#000"></div>
<div class="t" style="left:110px;top:239px;width:144px;text-align:center;font-size:13px;letter-spacing:0.3px;text-indent:0.3px;color:#ff0"><span style="text-decoration:underline wavy #f00;text-decoration-thickness:1px;text-underline-offset:0px;text-decoration-skip-ink:none">text</span> <span style="text-decoration:underline wavy #f00;text-decoration-thickness:1px;text-underline-offset:0px;text-decoration-skip-ink:none">begin</span></div>
<div class="t" style="left:110px;top:256px;width:144px;text-align:center;font-size:13px;letter-spacing:0.3px;text-indent:0.3px;color:#ff0"><span style="text-decoration:underline wavy #f00;text-decoration-thickness:1px;text-underline-offset:0px;text-decoration-skip-ink:none">text</span> <span style="text-decoration:underline wavy #f00;text-decoration-thickness:1px;text-underline-offset:0px;text-decoration-skip-ink:none">some</span></div>
<div class="t" style="left:110px;top:273px;width:144px;text-align:center;font-size:13px;letter-spacing:0.3px;text-indent:0.3px;color:#ff0"><span style="text-decoration:underline wavy #f00;text-decoration-thickness:1px;text-underline-offset:0px;text-decoration-skip-ink:none">some</span> <span style="text-decoration:underline wavy #f00;text-decoration-thickness:1px;text-underline-offset:0px;text-decoration-skip-ink:none">text</span> <span style="text-decoration:underline wavy #f00;text-decoration-thickness:1px;text-underline-offset:0px;text-decoration-skip-ink:none">some</span></div>
<div class="t" style="left:112px;top:290px;font-size:13px;letter-spacing:-0.12px;color:#000"><span style="text-decoration:underline wavy #f00;text-decoration-thickness:1px;text-underline-offset:0px;text-decoration-skip-ink:none">some</span> TEXT <span style="text-decoration:underline wavy #f00;text-decoration-thickness:1px;text-underline-offset:0px;text-decoration-skip-ink:none">some</span></div>
<div class="t" style="left:112px;top:307px;font-size:13px;letter-spacing:0.55px;color:#000"><span style="text-decoration:underline wavy #f00;text-decoration-thickness:1px;text-underline-offset:0px;text-decoration-skip-ink:none">sdstixtjk</span></div>
<div class="t" style="left:112px;top:324px;font-size:13px;letter-spacing:0.05px;color:#000"><span style="text-decoration:underline wavy #f00;text-decoration-thickness:1px;text-underline-offset:0px;text-decoration-skip-ink:none">bla-bla-bla</span></div>
<div class="t" style="left:110px;top:341px;width:144px;text-align:center;font-size:13px;letter-spacing:0.3px;text-indent:0.3px;color:#ff0"><span style="text-decoration:underline wavy #f00;text-decoration-thickness:1px;text-underline-offset:0px;text-decoration-skip-ink:none">end</span> <span style="text-decoration:underline wavy #f00;text-decoration-thickness:1px;text-underline-offset:0px;text-decoration-skip-ink:none">text</span></div>
<div class="t" style="left:112px;top:358px;font-size:13px;letter-spacing:-0.3px;color:#000"><span style="text-decoration:underline wavy #f00;text-decoration-thickness:1px;text-underline-offset:0px;text-decoration-skip-ink:none">end</span> <span style="text-decoration:underline wavy #f00;text-decoration-thickness:1px;text-underline-offset:0px;text-decoration-skip-ink:none">TeXt</span></div>
<div class="t" style="left:112px;top:375px;font-size:13px;letter-spacing:0.35px;color:#000"><span style="text-decoration:underline wavy #f00;text-decoration-thickness:1px;text-underline-offset:0px;text-decoration-skip-ink:none">end</span> <span style="text-decoration:underline wavy #f00;text-decoration-thickness:1px;text-underline-offset:0px;text-decoration-skip-ink:none">tixt</span></div>
<div class="t" style="left:110px;top:392px;width:144px;text-align:center;font-size:13px;letter-spacing:0.3px;text-indent:0.3px;color:#ff0"><span style="text-decoration:underline wavy #f00;text-decoration-thickness:1px;text-underline-offset:0px;text-decoration-skip-ink:none">text</span></div>
<div class="t" style="left:256px;top:239px;font-size:13px;letter-spacing:0.3px;color:#000"><span style="text-decoration:underline wavy #f00;text-decoration-thickness:1px;text-underline-offset:0px;text-decoration-skip-ink:none">text</span> <span style="text-decoration:underline wavy #f00;text-decoration-thickness:1px;text-underline-offset:0px;text-decoration-skip-ink:none">begin</span></div>
<div class="t" style="left:256px;top:256px;font-size:13px;letter-spacing:0.3px;color:#000"><span style="text-decoration:underline wavy #f00;text-decoration-thickness:1px;text-underline-offset:0px;text-decoration-skip-ink:none">text</span> <span style="text-decoration:underline wavy #f00;text-decoration-thickness:1px;text-underline-offset:0px;text-decoration-skip-ink:none">some</span></div>
<div class="t" style="left:256px;top:273px;font-size:13px;letter-spacing:0.3px;color:#000"><span style="text-decoration:underline wavy #f00;text-decoration-thickness:1px;text-underline-offset:0px;text-decoration-skip-ink:none">some</span> <span style="text-decoration:underline wavy #f00;text-decoration-thickness:1px;text-underline-offset:0px;text-decoration-skip-ink:none">text</span> <span style="text-decoration:underline wavy #f00;text-decoration-thickness:1px;text-underline-offset:0px;text-decoration-skip-ink:none">some</span></div>
<div class="t" style="left:254px;top:290px;width:144px;text-align:center;font-size:13px;letter-spacing:-0.12px;text-indent:-0.12px;color:#ff0"><span style="text-decoration:underline wavy #f00;text-decoration-thickness:1px;text-underline-offset:0px;text-decoration-skip-ink:none">some</span> TEXT <span style="text-decoration:underline wavy #f00;text-decoration-thickness:1px;text-underline-offset:0px;text-decoration-skip-ink:none">some</span></div>
<div class="t" style="left:254px;top:307px;width:144px;text-align:center;font-size:13px;letter-spacing:0.55px;text-indent:0.55px;color:#ff0"><span style="text-decoration:underline wavy #f00;text-decoration-thickness:1px;text-underline-offset:0px;text-decoration-skip-ink:none">sdstixtjk</span></div>
<div class="t" style="left:254px;top:324px;width:144px;text-align:center;font-size:13px;letter-spacing:0.05px;text-indent:0.05px;color:#ff0"><span style="text-decoration:underline wavy #f00;text-decoration-thickness:1px;text-underline-offset:0px;text-decoration-skip-ink:none">bla-bla-bla</span></div>
<div class="t" style="left:256px;top:341px;font-size:13px;letter-spacing:0.3px;color:#000"><span style="text-decoration:underline wavy #f00;text-decoration-thickness:1px;text-underline-offset:0px;text-decoration-skip-ink:none">end</span> <span style="text-decoration:underline wavy #f00;text-decoration-thickness:1px;text-underline-offset:0px;text-decoration-skip-ink:none">text</span></div>
<div class="t" style="left:254px;top:358px;width:144px;text-align:center;font-size:13px;letter-spacing:-0.3px;text-indent:-0.3px;color:#ff0"><span style="text-decoration:underline wavy #f00;text-decoration-thickness:1px;text-underline-offset:0px;text-decoration-skip-ink:none">end</span> <span style="text-decoration:underline wavy #f00;text-decoration-thickness:1px;text-underline-offset:0px;text-decoration-skip-ink:none">TeXt</span></div>
<div class="t" style="left:254px;top:375px;width:144px;text-align:center;font-size:13px;letter-spacing:0.35px;text-indent:0.35px;color:#ff0"><span style="text-decoration:underline wavy #f00;text-decoration-thickness:1px;text-underline-offset:0px;text-decoration-skip-ink:none">end</span> <span style="text-decoration:underline wavy #f00;text-decoration-thickness:1px;text-underline-offset:0px;text-decoration-skip-ink:none">tixt</span></div>
<div class="t" style="left:256px;top:392px;font-size:13px;letter-spacing:0.3px;color:#000"><span style="text-decoration:underline wavy #f00;text-decoration-thickness:1px;text-underline-offset:0px;text-decoration-skip-ink:none">text</span></div>
<div class="t" style="left:398px;top:239px;width:144px;text-align:center;font-size:13px;letter-spacing:0.3px;text-indent:0.3px;color:#ff0"><span style="text-decoration:underline wavy #f00;text-decoration-thickness:1px;text-underline-offset:0px;text-decoration-skip-ink:none">text</span> <span style="text-decoration:underline wavy #f00;text-decoration-thickness:1px;text-underline-offset:0px;text-decoration-skip-ink:none">begin</span></div>
<div class="t" style="left:398px;top:256px;width:144px;text-align:center;font-size:13px;letter-spacing:0.3px;text-indent:0.3px;color:#ff0"><span style="text-decoration:underline wavy #f00;text-decoration-thickness:1px;text-underline-offset:0px;text-decoration-skip-ink:none">text</span> <span style="text-decoration:underline wavy #f00;text-decoration-thickness:1px;text-underline-offset:0px;text-decoration-skip-ink:none">some</span></div>
<div class="t" style="left:400px;top:273px;font-size:13px;letter-spacing:0.3px;color:#000"><span style="text-decoration:underline wavy #f00;text-decoration-thickness:1px;text-underline-offset:0px;text-decoration-skip-ink:none">some</span> <span style="text-decoration:underline wavy #f00;text-decoration-thickness:1px;text-underline-offset:0px;text-decoration-skip-ink:none">text</span> <span style="text-decoration:underline wavy #f00;text-decoration-thickness:1px;text-underline-offset:0px;text-decoration-skip-ink:none">some</span></div>
<div class="t" style="left:400px;top:290px;font-size:13px;letter-spacing:-0.12px;color:#000"><span style="text-decoration:underline wavy #f00;text-decoration-thickness:1px;text-underline-offset:0px;text-decoration-skip-ink:none">some</span> TEXT <span style="text-decoration:underline wavy #f00;text-decoration-thickness:1px;text-underline-offset:0px;text-decoration-skip-ink:none">some</span></div>
<div class="t" style="left:400px;top:307px;font-size:13px;letter-spacing:0.55px;color:#000"><span style="text-decoration:underline wavy #f00;text-decoration-thickness:1px;text-underline-offset:0px;text-decoration-skip-ink:none">sdstixtjk</span></div>
<div class="t" style="left:400px;top:324px;font-size:13px;letter-spacing:0.05px;color:#000"><span style="text-decoration:underline wavy #f00;text-decoration-thickness:1px;text-underline-offset:0px;text-decoration-skip-ink:none">bla-bla-bla</span></div>
<div class="t" style="left:400px;top:341px;font-size:13px;letter-spacing:0.3px;color:#000"><span style="text-decoration:underline wavy #f00;text-decoration-thickness:1px;text-underline-offset:0px;text-decoration-skip-ink:none">end</span> <span style="text-decoration:underline wavy #f00;text-decoration-thickness:1px;text-underline-offset:0px;text-decoration-skip-ink:none">text</span></div>
<div class="t" style="left:400px;top:358px;font-size:13px;letter-spacing:-0.3px;color:#000"><span style="text-decoration:underline wavy #f00;text-decoration-thickness:1px;text-underline-offset:0px;text-decoration-skip-ink:none">end</span> <span style="text-decoration:underline wavy #f00;text-decoration-thickness:1px;text-underline-offset:0px;text-decoration-skip-ink:none">TeXt</span></div>
<div class="t" style="left:400px;top:375px;font-size:13px;letter-spacing:0.35px;color:#000"><span style="text-decoration:underline wavy #f00;text-decoration-thickness:1px;text-underline-offset:0px;text-decoration-skip-ink:none">end</span> <span style="text-decoration:underline wavy #f00;text-decoration-thickness:1px;text-underline-offset:0px;text-decoration-skip-ink:none">tixt</span></div>
<div class="t" style="left:398px;top:392px;width:144px;text-align:center;font-size:13px;letter-spacing:0.3px;text-indent:0.3px;color:#ff0"><span style="text-decoration:underline wavy #f00;text-decoration-thickness:1px;text-underline-offset:0px;text-decoration-skip-ink:none">text</span></div>
<div class="t" style="left:544px;top:239px;font-size:13px;letter-spacing:0.3px;color:#000"><span style="text-decoration:underline wavy #f00;text-decoration-thickness:1px;text-underline-offset:0px;text-decoration-skip-ink:none">text</span> <span style="text-decoration:underline wavy #f00;text-decoration-thickness:1px;text-underline-offset:0px;text-decoration-skip-ink:none">begin</span></div>
<div class="t" style="left:544px;top:256px;font-size:13px;letter-spacing:0.3px;color:#000"><span style="text-decoration:underline wavy #f00;text-decoration-thickness:1px;text-underline-offset:0px;text-decoration-skip-ink:none">text</span> <span style="text-decoration:underline wavy #f00;text-decoration-thickness:1px;text-underline-offset:0px;text-decoration-skip-ink:none">some</span></div>
<div class="t" style="left:544px;top:273px;font-size:13px;letter-spacing:0.3px;color:#000"><span style="text-decoration:underline wavy #f00;text-decoration-thickness:1px;text-underline-offset:0px;text-decoration-skip-ink:none">some</span> <span style="text-decoration:underline wavy #f00;text-decoration-thickness:1px;text-underline-offset:0px;text-decoration-skip-ink:none">text</span> <span style="text-decoration:underline wavy #f00;text-decoration-thickness:1px;text-underline-offset:0px;text-decoration-skip-ink:none">some</span></div>
<div class="t" style="left:544px;top:290px;font-size:13px;letter-spacing:-0.12px;color:#000"><span style="text-decoration:underline wavy #f00;text-decoration-thickness:1px;text-underline-offset:0px;text-decoration-skip-ink:none">some</span> TEXT <span style="text-decoration:underline wavy #f00;text-decoration-thickness:1px;text-underline-offset:0px;text-decoration-skip-ink:none">some</span></div>
<div class="t" style="left:544px;top:307px;font-size:13px;letter-spacing:0.55px;color:#000"><span style="text-decoration:underline wavy #f00;text-decoration-thickness:1px;text-underline-offset:0px;text-decoration-skip-ink:none">sdstixtjk</span></div>
<div class="t" style="left:544px;top:324px;font-size:13px;letter-spacing:0.05px;color:#000"><span style="text-decoration:underline wavy #f00;text-decoration-thickness:1px;text-underline-offset:0px;text-decoration-skip-ink:none">bla-bla-bla</span></div>
<div class="t" style="left:542px;top:341px;width:144px;text-align:center;font-size:13px;letter-spacing:0.3px;text-indent:0.3px;color:#ff0"><span style="text-decoration:underline wavy #f00;text-decoration-thickness:1px;text-underline-offset:0px;text-decoration-skip-ink:none">end</span> <span style="text-decoration:underline wavy #f00;text-decoration-thickness:1px;text-underline-offset:0px;text-decoration-skip-ink:none">text</span></div>
<div class="t" style="left:544px;top:358px;font-size:13px;letter-spacing:-0.3px;color:#000"><span style="text-decoration:underline wavy #f00;text-decoration-thickness:1px;text-underline-offset:0px;text-decoration-skip-ink:none">end</span> <span style="text-decoration:underline wavy #f00;text-decoration-thickness:1px;text-underline-offset:0px;text-decoration-skip-ink:none">TeXt</span></div>
<div class="t" style="left:544px;top:375px;font-size:13px;letter-spacing:0.35px;color:#000"><span style="text-decoration:underline wavy #f00;text-decoration-thickness:1px;text-underline-offset:0px;text-decoration-skip-ink:none">end</span> <span style="text-decoration:underline wavy #f00;text-decoration-thickness:1px;text-underline-offset:0px;text-decoration-skip-ink:none">tixt</span></div>
<div class="t" style="left:542px;top:392px;width:144px;text-align:center;font-size:13px;letter-spacing:0.3px;text-indent:0.3px;color:#ff0"><span style="text-decoration:underline wavy #f00;text-decoration-thickness:1px;text-underline-offset:0px;text-decoration-skip-ink:none">text</span></div>
<div class="t" style="left:110px;top:222px;width:144px;text-align:center;font-size:12.6px;font-weight:bold;letter-spacing:0.1px;text-indent:0.1px;color:#000"><span style="text-decoration:underline wavy #f00;text-decoration-thickness:1px;text-underline-offset:0px;text-decoration-skip-ink:none">Утрымоўвае</span> <span style="text-decoration:underline wavy #f00;text-decoration-thickness:1px;text-underline-offset:0px;text-decoration-skip-ink:none">тэкст</span></div>
<div class="t" style="left:254px;top:222px;width:144px;text-align:center;font-size:12.6px;font-weight:bold;letter-spacing:0.25px;text-indent:0.25px;color:#000">Не <span style="text-decoration:underline wavy #f00;text-decoration-thickness:1px;text-underline-offset:0px;text-decoration-skip-ink:none">ўтрымоўвае</span> <span style="text-decoration:underline wavy #f00;text-decoration-thickness:1px;text-underline-offset:0px;text-decoration-skip-ink:none">тэкст</span></div>
<div class="t" style="left:398px;top:222px;width:144px;text-align:center;font-size:12.6px;font-weight:bold;letter-spacing:0.65px;text-indent:0.65px;color:#000"><span style="text-decoration:underline wavy #f00;text-decoration-thickness:1px;text-underline-offset:0px;text-decoration-skip-ink:none">Пачынаецца</span> <span style="text-decoration:underline wavy #f00;text-decoration-thickness:1px;text-underline-offset:0px;text-decoration-skip-ink:none">з</span></div>
<div class="t" style="left:542px;top:222px;width:144px;text-align:center;font-size:12.6px;font-weight:bold;letter-spacing:0.7px;text-indent:0.7px;color:#000"><span style="text-decoration:underline wavy #f00;text-decoration-thickness:1px;text-underline-offset:0px;text-decoration-skip-ink:none">Сканчаецца</span></div>
<div class="ab" style="left:50px;top:201px;width:62px;height:20px;border:3px solid #000;border-left-width:1px"></div>
<div class="ab" style="left:109px;top:218px;width:6px;height:6px;background:#000"></div>
<div class="ab" style="left:707px;top:168px;width:17px;height:283px;background:#d7d3d0"></div>
<div class="ab" style="left:708px;top:169px;width:16px;height:5px;background:#e6e3e0;border-bottom:1px solid #b5b1ad"></div>
<div class="ab" style="left:711px;top:171px;width:11px;height:2px;background:#111"></div>
<svg class="ab" style="left:710px;top:178px;" width="12" height="8" viewBox="0 0 12 8"><path d="M1.5 6.5L6 2L10.5 6.5" fill="none" stroke="#222" stroke-width="1.6"/></svg>
<div class="ab" style="left:709px;top:190px;width:13px;height:213px;background:#b3aba7;border:1px solid #8f8884;border-radius:4px"></div>
<div class="ab" style="left:711px;top:199px;width:10px;height:91px;background:linear-gradient(90deg,#ece9e7,#dcd8d5);border:1px solid #a09a96;border-radius:3px"></div>
<svg class="ab" style="left:710px;top:406px;" width="12" height="8" viewBox="0 0 12 8"><path d="M1.5 6.5L6 2L10.5 6.5" fill="none" stroke="#222" stroke-width="1.6"/></svg>
<svg class="ab" style="left:710px;top:419px;" width="12" height="8" viewBox="0 0 12 8"><path d="M1.5 1.5L6 6L10.5 1.5" fill="none" stroke="#222" stroke-width="1.6"/></svg>
<div class="ab" style="left:13px;top:434px;width:695px;height:17px;background:#d7d3d0"></div>
<div class="ab" style="left:13px;top:451px;width:711px;height:1px;background:#8f8b87"></div>
<div class="ab" style="left:13px;top:434px;width:264px;height:17px;background:#d3cfcc;border-right:1px solid #6f6b67"></div>
<div class="ab" style="left:150px;top:434px;width:127px;height:1px;background:#6f6b67"></div>
<div class="ab" style="left:13px;top:450px;width:264px;height:1px;background:#6f6b67"></div>
<div class="ab" style="left:15px;top:436px;width:13px;height:12px;background:linear-gradient(#f8f6f4,#e2dedb);border-radius:4px;box-shadow:0 0 0 0.5px #c8c3bf,0 1px 1px rgba(0,0,0,.25)"></div>
<div class="ab" style="left:32px;top:436px;width:13px;height:12px;background:linear-gradient(#f8f6f4,#e2dedb);border-radius:4px;box-shadow:0 0 0 0.5px #c8c3bf,0 1px 1px rgba(0,0,0,.25)"></div>
<div class="ab" style="left:49px;top:436px;width:13px;height:12px;background:linear-gradient(#f8f6f4,#e2dedb);border-radius:4px;box-shadow:0 0 0 0.5px #c8c3bf,0 1px 1px rgba(0,0,0,.25)"></div>
<div class="ab" style="left:66px;top:436px;width:13px;height:12px;background:linear-gradient(#f8f6f4,#e2dedb);border-radius:4px;box-shadow:0 0 0 0.5px #c8c3bf,0 1px 1px rgba(0,0,0,.25)"></div>
<svg class="ab" style="left:18px;top:437px;" width="8" height="10" viewBox="0 0 8 10"><rect x="0.5" y="0.5" width="1.6" height="9" fill="#111"/><path d="M7.5 0.5V9.5L2 5Z" fill="#111"/></svg>
<svg class="ab" style="left:35px;top:437px;" width="8" height="10" viewBox="0 0 8 10"><path d="M6.5 0.5V9.5L1 5Z" fill="#111"/></svg>
<svg class="ab" style="left:52px;top:437px;" width="8" height="10" viewBox="0 0 8 10"><path d="M1.5 0.5V9.5L7 5Z" fill="#111"/></svg>
<svg class="ab" style="left:69px;top:437px;" width="8" height="10" viewBox="0 0 8 10"><path d="M0.5 0.5V9.5L6 5Z" fill="#111"/><rect x="5.9" y="0.5" width="1.6" height="9" fill="#111"/></svg>
<svg class="ab" style="left:80px;top:433px;" width="100" height="19" viewBox="0 0 100 19"><path d="M1.5 1L8 17.5H66.5L71.5 1Z" fill="#fff"/><path d="M1.5 1L8 17.5M66.5 17.5L71.5 1" stroke="#7a7672" fill="none"/><path d="M73 1.5L67 17H90L96 1.5Z" fill="#d9d5d2"/><path d="M73 1.5L67 17M96 1.5L90 17" stroke="#6f6b67" stroke-dasharray="1.2 0.8" fill="none"/><path d="M73.5 2.5H95" stroke="#fff"/></svg>
<div class="ab" style="left:87px;top:450px;width:60px;height:1px;background:#6f6b67"></div>
<div class="t" style="left:90px;top:435px;font-size:13px;font-weight:bold;color:#111;letter-spacing:1.35px">Sheet 1</div>
<svg class="ab" style="left:155px;top:436px;" width="12" height="12" viewBox="0 0 12 12"><path d="M6 1.5V10.5M1.5 6H10.5" stroke="#2a8a1a" stroke-width="4.2" stroke-linecap="round"/><path d="M6 2V10M2 6H10" stroke="#6ad04a" stroke-width="2"/></svg>
<div class="ab" style="left:277px;top:434px;width:6px;height:17px;background:#f4f2f0;border-right:1px solid #6f6b67;border-left:1px solid #b5b1ad"></div>
<svg class="ab" style="left:286px;top:437px;" width="9" height="12" viewBox="0 0 9 12"><path d="M6.5 1.5L2 6L6.5 10.5" fill="none" stroke="#8a8886" stroke-width="1.6"/></svg>
<div class="ab" style="left:298px;top:435px;width:375px;height:14px;background:#b3aba7;border:1px solid #8f8884;border-radius:4px"></div>
<div class="ab" style="left:299px;top:436px;width:152px;height:12px;background:linear-gradient(#ece9e7,#dcd8d5);border:1px solid #8f8a86;border-radius:3px"></div>
<svg class="ab" style="left:674px;top:437px;" width="9" height="11" viewBox="0 0 9 11"><path d="M6.5 1L2 5.5L6.5 10" fill="none" stroke="#8a8886" stroke-width="1.6"/></svg>
<svg class="ab" style="left:688px;top:437px;" width="9" height="11" viewBox="0 0 9 11"><path d="M2 1L6.5 5.5L2 10" fill="none" stroke="#111" stroke-width="1.7"/></svg>
<div class="ab" style="left:702px;top:434px;width:5px;height:17px;background:#f4f2f0;border-right:1px solid #b5b1ad"></div>
<div class="ab" style="left:703px;top:438px;width:2px;height:10px;background:#111"></div>
<svg class="ab" style="left:365px;top:457px;" width="14" height="12" viewBox="0 0 14 12"><rect x="0" y="2" width="9" height="7" fill="#7a7a7a"/><path d="M10 0.5H13M11.5 0.5V10.5M10 10.5H13" stroke="#7a7a7a"/></svg>
<svg class="ab" style="left:393px;top:455px;" width="14" height="14" viewBox="0 0 14 14"><path d="M9.5 1.5H1.5V12.5H9.5V7" fill="none" stroke="#8a8a8a"/><path d="M4 6L6 9L12 2" fill="none" stroke="#8a8a8a"/></svg>
<div class="ab" style="left:543px;top:462px;width:8px;height:2px;background:#8a8784"></div>
<div class="ab" style="left:557px;top:462px;width:96px;height:2px;background:#8a8784"></div>
<div class="ab" style="left:600px;top:458px;width:10px;height:10px;background:#fff;border:1.5px solid #8a8784;border-radius:5px"></div>
<svg class="ab" style="left:660px;top:459px;" width="9" height="9" viewBox="0 0 9 9"><path d="M4.5 0V9M0 4.5H9" stroke="#7a7774" stroke-width="2.2"/></svg>
<div class="t" style="left:24px;top:456px;font-size:13px;color:#1a1a1a;letter-spacing:0.75px">Лист 1 / 1</div>
<div class="t" style="left:207px;top:456px;font-size:13px;color:#1a1a1a;letter-spacing:0.6px">Базовый</div>
<div class="t" style="left:459px;top:456px;font-size:13px;color:#1a1a1a;letter-spacing:0.45px">Сумма=0</div>
<div class="t" style="left:679px;top:456px;font-size:13px;color:#1a1a1a;letter-spacing:0.8px">100 %</div>
</body></html>
